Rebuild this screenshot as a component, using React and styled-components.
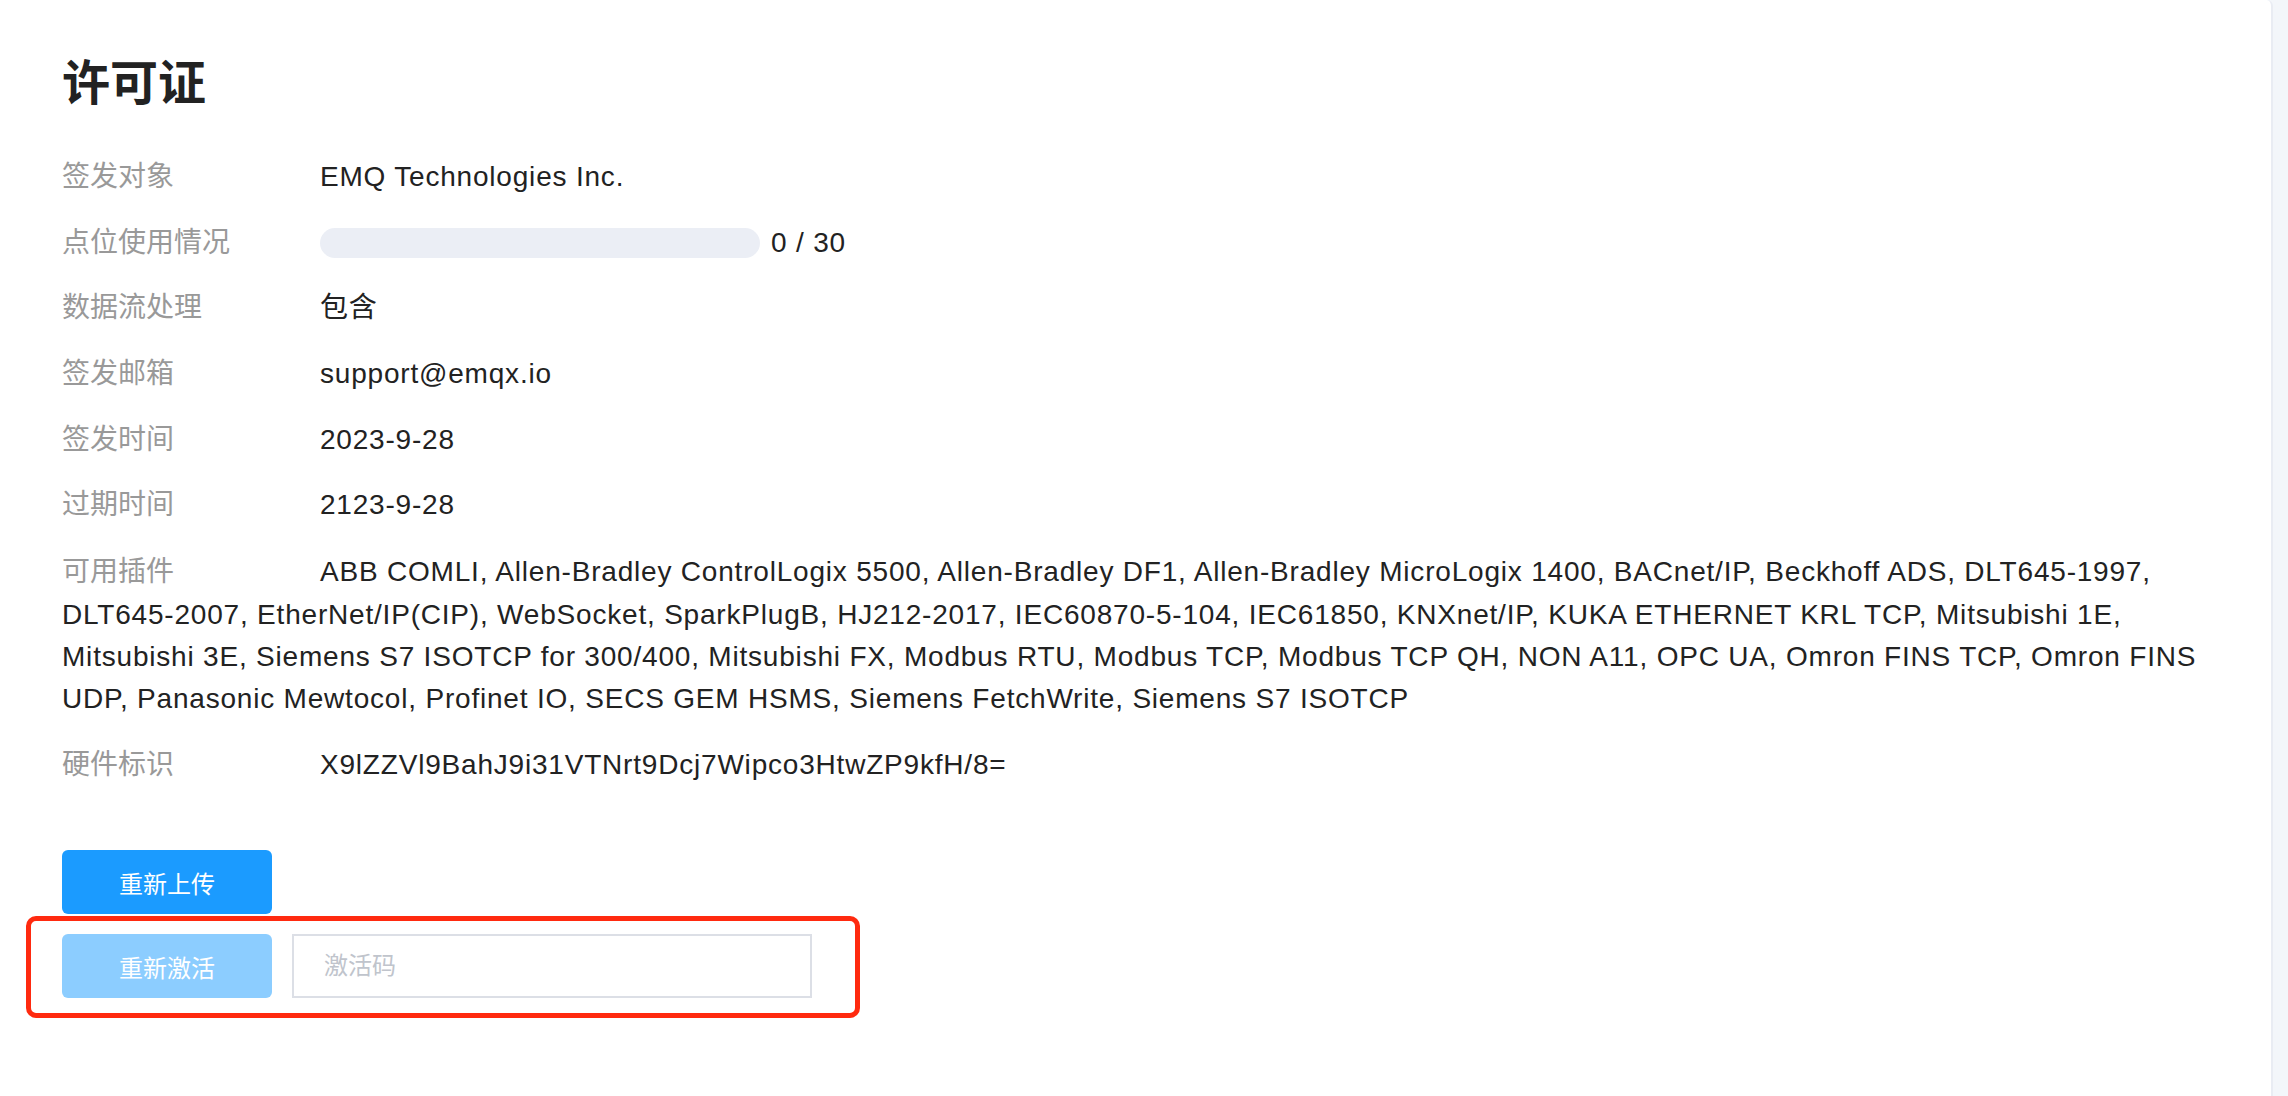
import React from "react";
import styled, { createGlobalStyle } from "styled-components";

const GlobalStyle = createGlobalStyle`
    body {
        margin: 0;
        background-color: #f3f6fa;
        font-family: "Liberation Sans", "Noto Sans CJK SC", sans-serif;
    }
`;

const plugins =
    "ABB COMLI, Allen-Bradley ControlLogix 5500, Allen-Bradley DF1, Allen-Bradley MicroLogix 1400, BACnet/IP, Beckhoff ADS, DLT645-1997, DLT645-2007, EtherNet/IP(CIP), WebSocket, SparkPlugB, HJ212-2017, IEC60870-5-104, IEC61850, KNXnet/IP, KUKA ETHERNET KRL TCP, Mitsubishi 1E, Mitsubishi 3E, Siemens S7 ISOTCP for 300/400, Mitsubishi FX, Modbus RTU, Modbus TCP, Modbus TCP QH, NON A11, OPC UA, Omron FINS TCP, Omron FINS UDP, Panasonic Mewtocol, Profinet IO, SECS GEM HSMS, Siemens FetchWrite, Siemens S7 ISOTCP";

export default function App() {
    const used = 0;
    const total = 30;
    return (
        <>
            <GlobalStyle />
            <Page>
                <Card>
                    <Title>许可证</Title>
                    <InfoList>
                        <Row>
                            <Label>签发对象</Label>
                            <Value>EMQ Technologies Inc.</Value>
                        </Row>
                        <Row>
                            <Label>点位使用情况</Label>
                            <Usage>
                                <Bar>
                                    <BarFill style={{ width: `${(used / total) * 100}%` }} />
                                </Bar>
                                <Value>
                                    {used} / {total}
                                </Value>
                            </Usage>
                        </Row>
                        <Row>
                            <Label>数据流处理</Label>
                            <Value>包含</Value>
                        </Row>
                        <Row>
                            <Label>签发邮箱</Label>
                            <Value>support@emqx.io</Value>
                        </Row>
                        <Row>
                            <Label>签发时间</Label>
                            <Value>2023-9-28</Value>
                        </Row>
                        <Row>
                            <Label>过期时间</Label>
                            <Value>2123-9-28</Value>
                        </Row>
                        <FlowRow>
                            <InlineLabel>可用插件</InlineLabel>
                            <Value>{plugins}</Value>
                        </FlowRow>
                        <Row>
                            <Label>硬件标识</Label>
                            <Value>X9lZZVl9BahJ9i31VTNrt9Dcj7Wipco3HtwZP9kfH/8=</Value>
                        </Row>
                    </InfoList>
                    <Actions>
                        <Button>重新上传</Button>
                        <Highlight>
                            <Button disabled>重新激活</Button>
                            <CodeInput placeholder="激活码" />
                        </Highlight>
                    </Actions>
                </Card>
            </Page>
        </>
    );
}

const Page = styled.div`
    display: flex;
    min-height: 100vh;
`;
const Card = styled.div`
    width: 2273px;
    box-sizing: border-box;
    min-height: 100vh;
    background-color: #fff;
    border-right: 2px solid #e9ecf3;
    border-top-right-radius: 6px;
    padding: 55px 62px 0 62px;
`;
const Title = styled.h1`
    margin: 0;
    font-size: 48px;
    line-height: 58px;
    font-weight: 700;
    color: #222;
`;
const InfoList = styled.div`
    margin-top: 43px;
    display: flex;
    flex-direction: column;
    gap: 23.7px;
`;
const Row = styled.div`
    display: flex;
    align-items: center;
    font-size: 28px;
    line-height: 42px;
`;
const FlowRow = styled.div`
    font-size: 28px;
    line-height: 42.4px;
    padding-top: 1px;
    color: #222;
`;
const Label = styled.span`
    width: 258px;
    flex-shrink: 0;
    color: #999;
`;
const InlineLabel = styled(Label)`
    display: inline-block;
`;
const Value = styled.span`
    color: #222;
    letter-spacing: 0.8px;
`;
const Usage = styled.div`
    display: flex;
    align-items: center;
    gap: 11px;
`;
const Bar = styled.div`
    width: 440px;
    height: 30px;
    border-radius: 15px;
    background-color: #ebeef5;
    overflow: hidden;
`;
const BarFill = styled.div`
    height: 100%;
    background-color: #1b9bff;
`;
const Actions = styled.div`
    margin-top: 64px;
    display: flex;
    flex-direction: column;
    align-items: flex-start;
    gap: 2px;
`;
const Button = styled.button`
    width: 210px;
    height: 64px;
    border: none;
    border-radius: 6px;
    background-color: ${(p) => (p.disabled ? "#8ccdff" : "#1b9bff")};
    color: #fff;
    font-family: inherit;
    font-size: 24px;
    cursor: ${(p) => (p.disabled ? "not-allowed" : "pointer")};
`;
const Highlight = styled.div`
    display: flex;
    align-items: center;
    gap: 20px;
    margin-left: -36px;
    padding: 13px 43px 15px 31px;
    border: 5px solid #ff2a0f;
    border-radius: 10px;
`;
const CodeInput = styled.input`
    width: 520px;
    height: 64px;
    box-sizing: border-box;
    border: 2px solid #dcdfe6;
    padding: 0 30px;
    font-family: inherit;
    font-size: 24px;
    color: #222;
    outline: none;
    &::placeholder {
        color: #c0c4cc;
    }
`;
